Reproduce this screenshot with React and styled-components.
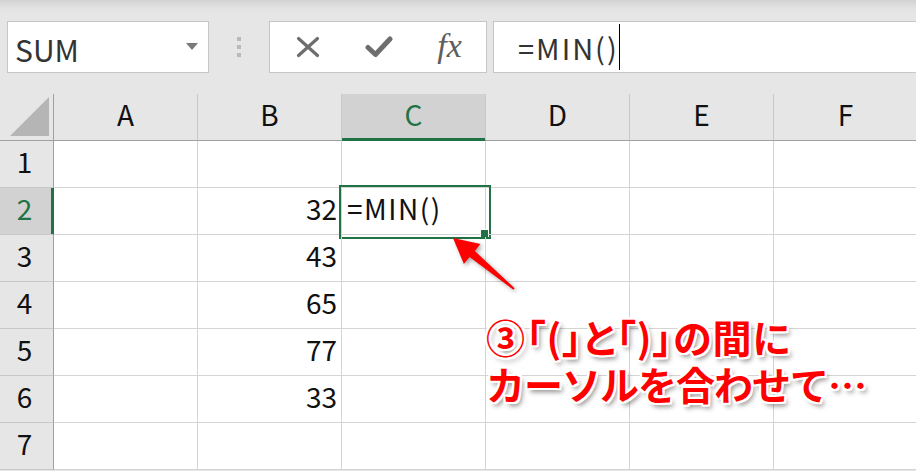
import React from "react";
import styled, { createGlobalStyle, css } from "styled-components";

const GlobalStyle = createGlobalStyle`
  html, body { margin: 0; padding: 0; background: #ffffff; }
  * { box-sizing: border-box; }
`;

const FONT = `"Noto Sans CJK JP", "Noto Sans", sans-serif`;
const GREEN = "#217346";

const Screen = styled.div`
  position: relative;
  width: 916px;
  height: 471px;
  overflow: hidden;
  background: #e6e6e6;
  font-family: ${FONT};
`;

const TopBar = styled.div`
  height: 94px;
  display: flex;
  align-items: flex-start;
  padding: 21px 0 0 7px;
  background: linear-gradient(#d2d2d2 0px, #e2e2e2 8px, #e6e6e6 14px);
`;

const NameBox = styled.div`
  flex: 0 0 202px;
  height: 52px;
  border: 1px solid #c6c6c6;
  background: #ffffff;
  display: flex;
  align-items: center;
  justify-content: space-between;
  padding: 4px 10px 0 7px;
  font-size: 30px;
  color: #333;
`;

const DropTriangle = styled.span`
  width: 0;
  height: 0;
  margin-top: -6px;
  border-left: 6.5px solid transparent;
  border-right: 6.5px solid transparent;
  border-top: 7px solid #7a7a7a;
`;

const Grip = styled.div`
  margin: 16px 0 0 28px;
  display: flex;
  flex-direction: column;
  gap: 4px;
`;

const GripDot = styled.span`
  width: 4px;
  height: 4px;
  background: #b9b9b9;
`;

const FxBox = styled.div`
  flex: 0 0 218px;
  margin-left: 28px;
  height: 52px;
  border: 1px solid #c6c6c6;
  background: #ffffff;
  display: grid;
  grid-template-columns: repeat(3, 71px);
  padding-left: 2px;
  align-items: center;
  justify-items: center;
  color: #6e6e6e;
`;

const FxLabel = styled.span`
  font-family: "Liberation Serif", serif;
  font-style: italic;
  font-size: 34px;
  line-height: 1;
  color: #5e5e5e;
  margin-top: -3px;
`;

const FormulaInput = styled.div`
  flex: 0 0 440px;
  margin-left: 6px;
  height: 52px;
  border: 1px solid #c6c6c6;
  border-right: none;
  background: #ffffff;
  display: flex;
  align-items: center;
  padding-left: 24px;
  font-size: 29px;
  letter-spacing: 2px;
  color: #333;
`;

const Caret = styled.span`
  width: 1px;
  height: 46px;
  background: #000;
`;

const Sheet = styled.div`
  display: grid;
  grid-template-columns: 54px repeat(6, 144px);
  grid-auto-rows: 47px;
  background: #ffffff;
`;

const Corner = styled.div`
  background: #e6e6e6;
  border-right: 1px solid #a0a0a0;
  border-bottom: 1px solid #a0a0a0;
  display: flex;
  align-items: flex-end;
  justify-content: flex-end;
  padding: 0 3px 3px 0;
`;

const ColHeader = styled.div`
  background: #e6e6e6;
  border-right: 1px solid #c8c8c8;
  border-bottom: 1px solid #a0a0a0;
  display: flex;
  align-items: center;
  justify-content: center;
  font-size: 28px;
  line-height: 1;
  color: #111;
  padding-bottom: 6px;
  ${(p) =>
    p.$selected &&
    css`
      background: #d2d2d2;
      color: ${GREEN};
      border-bottom-color: ${GREEN};
      box-shadow: inset 0 -2px 0 ${GREEN};
    `}
`;

const RowHeader = styled.div`
  background: #e6e6e6;
  border-right: 1px solid #a0a0a0;
  border-bottom: 1px solid #c8c8c8;
  display: flex;
  align-items: center;
  justify-content: center;
  font-size: 28px;
  line-height: 1;
  color: #111;
  padding: 0 4px 6px 0;
  ${(p) =>
    p.$selected &&
    css`
      background: #d2d2d2;
      color: ${GREEN};
      border-right-color: ${GREEN};
      box-shadow: inset -2px 0 0 ${GREEN};
    `}
`;

const Cell = styled.div`
  position: relative;
  border-right: 1px solid #d4d4d4;
  border-bottom: 1px solid #d4d4d4;
  display: flex;
  align-items: center;
  justify-content: ${(p) => (p.$align === "right" ? "flex-end" : "flex-start")};
  padding: 0 4px 6px 5px;
  font-size: 28px;
  line-height: 1;
  color: #111;
  ${(p) =>
    p.$active &&
    css`
      letter-spacing: 1.5px;
      &::after {
        content: "";
        position: absolute;
        left: -3px;
        top: -3px;
        width: 148px;
        height: 50px;
        border: 2px solid ${GREEN};
      }
    `}
`;

const FillHandle = styled.span`
  position: absolute;
  left: 138px;
  top: 41px;
  width: 8px;
  height: 8px;
  background: ${GREEN};
  border-left: 1px solid #fff;
  border-top: 1px solid #fff;
  z-index: 2;
`;

const Callout = styled.div`
  position: absolute;
  left: 486px;
  top: 313px;
  font-family: ${FONT};
  font-weight: 700;
  font-size: 39px;
  line-height: 47px;
  color: #ff0000;
  white-space: nowrap;
  text-shadow: -2px -2px 0 #fff, 2px -2px 0 #fff, -2px 2px 0 #fff, 2px 2px 0 #fff,
    0 -2px 0 #fff, 0 2px 0 #fff, -2px 0 0 #fff, 2px 0 0 #fff,
    3px 4px 5px rgba(0, 0, 0, 0.45);
`;

const CalloutLine = styled.div`
  font-feature-settings: ${(p) => (p.$proportional ? '"palt"' : "normal")};
  letter-spacing: ${(p) => (p.$proportional ? "1px" : "-1px")};
`;

const ArrowSvg = styled.svg`
  position: absolute;
  left: 440px;
  top: 225px;
  overflow: visible;
  filter: drop-shadow(2px 2px 2px rgba(0, 0, 0, 0.35));
`;

const columns = ["A", "B", "C", "D", "E", "F"];
const values = { 2: "32", 3: "43", 4: "65", 5: "77", 6: "33" };

function CancelIcon() {
  return (
    <svg width="24" height="22" viewBox="0 0 24 22">
      <path d="M2.5 2.5 L21.5 19.5 M21.5 2.5 L2.5 19.5" stroke="#6e6e6e" strokeWidth="3.2" strokeLinecap="round" fill="none" />
    </svg>
  );
}

function CheckIcon() {
  return (
    <svg width="28" height="22" viewBox="0 0 28 22">
      <path d="M3 11.5 L10.5 18.5 L25 3" stroke="#6e6e6e" strokeWidth="5" strokeLinecap="round" strokeLinejoin="round" fill="none" />
    </svg>
  );
}

export default function App() {
  const rows = [1, 2, 3, 4, 5, 6, 7];
  return (
    <>
      <GlobalStyle />
      <Screen>
        <TopBar>
          <NameBox>
            <span>SUM</span>
            <DropTriangle />
          </NameBox>
          <Grip>
            <GripDot />
            <GripDot />
            <GripDot />
          </Grip>
          <FxBox>
            <CancelIcon />
            <CheckIcon />
            <FxLabel>fx</FxLabel>
          </FxBox>
          <FormulaInput>
            <span>=MIN()</span>
            <Caret />
          </FormulaInput>
        </TopBar>
        <Sheet>
          <Corner>
            <svg width="40" height="40" viewBox="0 0 40 40">
              <polygon points="0,39 39,0 39,39" fill="#b5b5b5" />
            </svg>
          </Corner>
          {columns.map((c) => (
            <ColHeader key={c} $selected={c === "C"}>
              {c}
            </ColHeader>
          ))}
          {rows.map((r) => (
            <React.Fragment key={r}>
              <RowHeader $selected={r === 2}>{r}</RowHeader>
              {columns.map((c) => {
                const active = r === 2 && c === "C";
                return (
                  <Cell key={c} $align={c === "B" ? "right" : "left"} $active={active}>
                    {c === "B" && values[r]}
                    {active && "=MIN()"}
                    {active && <FillHandle />}
                  </Cell>
                );
              })}
            </React.Fragment>
          ))}
        </Sheet>
        <ArrowSvg width="90" height="75" viewBox="0 0 90 75">
          <polygon
            points="13,13 40.5,19 34.8,25.9 74.6,63.2 73.4,64.8 29.6,32.1 23.9,39"
            fill="#ff0000"
          />
        </ArrowSvg>
        <Callout>
          <CalloutLine $proportional>③「(」と「)」の間に</CalloutLine>
          <CalloutLine>カーソルを合わせて…</CalloutLine>
        </Callout>
      </Screen>
    </>
  );
}
